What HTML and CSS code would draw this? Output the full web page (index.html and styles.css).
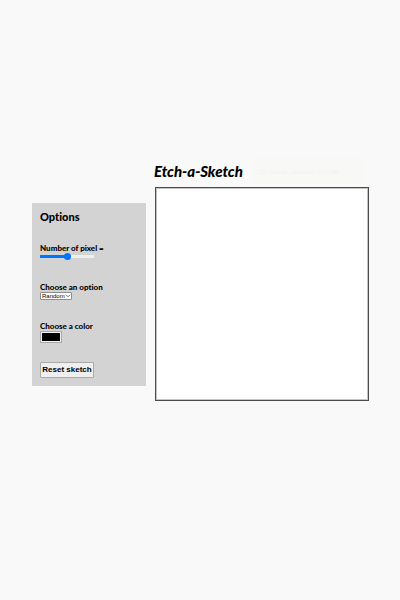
FILE: index.html
```html
<!DOCTYPE html>
<html lang="en">
<head>
<meta charset="utf-8">
<meta name="viewport" content="width=device-width, initial-scale=1">
<title>Etch-a-Sketch</title>
<link rel="stylesheet" href="styles.css">
</head>
<body>
<main class="app">
  <aside class="options">
    <h2 class="options-title">Options</h2>
    <div class="field">
      <label for="pixels">Number of pixel =</label>
      <input class="slider" type="range" id="pixels" min="0" max="100" value="51">
    </div>
    <div class="field">
      <label for="mode">Choose an option</label>
      <span class="select-wrap">
        <select class="mode" id="mode"><option>Random</option><option>Color</option></select>
        <svg class="chevron" viewBox="0 0 6 4" aria-hidden="true"><path d="M1 .8 3 2.8 5 .8" fill="none" stroke="#444" stroke-width=".8"/></svg>
      </span>
    </div>
    <div class="field">
      <label for="color">Choose a color</label>
      <input class="color" type="color" id="color" value="#000000">
    </div>
    <button class="reset" type="button">Reset sketch</button>
  </aside>
  <section class="sketch">
    <h1 class="title">Etch-a-Sketch</h1>
    <div class="hover-card">
      <svg class="hover-icon" viewBox="0 0 6 6" aria-hidden="true"><circle cx="3" cy="3" r="2.4" fill="none" stroke="currentColor"/><path d="M3 3 4 2" stroke="currentColor"/></svg>
      <span>Uso de memoria: 72.5 MB</span>
    </div>
    <div class="board"></div>
  </section>
</main>
</body>
</html>
```
FILE: styles.css
```css
* {
  box-sizing: border-box;
}

body {
  margin: 0;
  background: #f9f9f9;
  color: #000;
  font-family: Lato, "Open Sans", sans-serif;
  font-variant-ligatures: none;
}

.app {
  display: grid;
  grid-template-columns: 114px 1fr;
  column-gap: 8px;
  align-items: center;
  min-height: 100vh;
  padding: 0 31px 11px 32px;
}

.options {
  display: flex;
  flex-direction: column;
  align-items: flex-start;
  padding: 8px;
  background: #d3d3d3;
}

.options-title {
  margin: 0 0 20px;
  font-size: 11px;
  font-weight: 900;
  line-height: 12px;
}

.field {
  display: flex;
  flex-direction: column;
  align-items: flex-start;
  height: 39px;
  padding-top: 1px;
  font-size: 8px;
  font-weight: 900;
  line-height: 9px;
  white-space: nowrap;
}

.slider {
  appearance: none;
  width: 54px;
  height: 7px;
  margin: 0;
  background: linear-gradient(#0075ff, #0075ff) left center / 51% 3px no-repeat,
    linear-gradient(#efefef, #efefef) center / 100% 3px no-repeat;
}

.slider::-webkit-slider-thumb {
  appearance: none;
  width: 7px;
  height: 7px;
  background: #0075ff;
  border-radius: 50%;
}

.select-wrap {
  display: grid;
  width: 32px;
  height: 8px;
}

.mode,
.chevron {
  grid-area: 1 / 1;
}

.mode {
  appearance: none;
  width: 100%;
  height: 8px;
  padding: 0 0 0 1px;
  background: #fff;
  border: 1px solid #8d8d8d;
  border-radius: 1px;
  color: #000;
  font: 6px/6px "Liberation Sans", sans-serif;
}

.chevron {
  width: 6px;
  height: 4px;
  margin-right: 1px;
  place-self: center end;
  pointer-events: none;
}

.color {
  appearance: none;
  width: 22px;
  height: 12px;
  padding: 1px;
  background: #efefef;
  border: 1px solid #aaa;
}

.color::-webkit-color-swatch-wrapper {
  padding: 0;
}

.color::-webkit-color-swatch {
  border: 0;
}

.reset {
  width: 54px;
  height: 16px;
  margin-top: 2px;
  padding: 0;
  background: #efefef;
  border: 1px solid #aaa;
  border-radius: 1px;
  color: #000;
  font: bold 8px/12px "Liberation Sans", sans-serif;
  white-space: nowrap;
}

.sketch {
  position: relative;
  margin-bottom: 26px;
}

.title {
  margin: 0 0 8px;
  font-size: 15px;
  font-style: italic;
  font-weight: 900;
  line-height: 16px;
}

.hover-card {
  position: absolute;
  top: -7px;
  right: 6px;
  display: flex;
  align-items: center;
  gap: 4px;
  width: 110px;
  height: 27px;
  padding: 5px 6px 0;
  background: #f8f8f7;
  color: #f3f3f2;
  font: 6px/8px "Liberation Sans", sans-serif;
  white-space: nowrap;
}

.hover-icon {
  width: 6px;
  height: 6px;
}

.board {
  aspect-ratio: 1;
  margin-left: 1px;
  background: #fff;
  border: 1px solid #4b4b4b;
  outline: 1px solid #c4c4c4;
  outline-offset: -2px;
}
```
